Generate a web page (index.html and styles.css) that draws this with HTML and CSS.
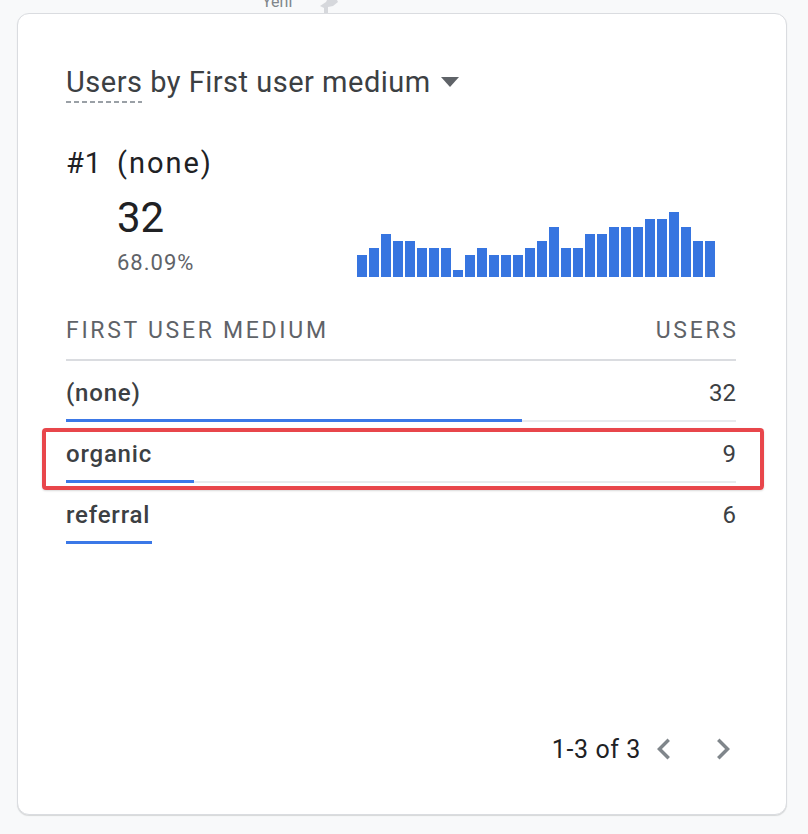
FILE: index.html
```html
<!DOCTYPE html>
<html>
<head>
<meta charset="utf-8">
<link rel="stylesheet" href="styles.css">
</head>
<body>
<div class="topstrip">
  <span class="yeni">Yeni</span>
  <svg class="pin" width="26" height="14" viewBox="0 0 26 14"><path d="M6 6 L12 2 L14 -2 L22 -2 L24 2 L19 6 L14 7 L14 14 L10 14 L10 8 Z" fill="#d6d8dc"/></svg>
</div>
<div class="card">
  <div class="title-row">
    <span class="title"><span class="dashed">Users</span> by First user medium</span>
    <svg class="caret" width="18" height="10" viewBox="0 0 18 10"><path d="M0 0 L18 0 L9 10 Z" fill="#5f6368"/></svg>
  </div>
  <div class="rank"><span class="rank-no">#1</span><span class="rank-name">(none)</span></div>
  <div class="metric-row">
    <div class="metric">
      <div class="big">32</div>
      <div class="pct">68.09%</div>
    </div>
    <div class="spark">
      <div class="bar" style="height:22px"></div>
      <div class="bar" style="height:29px"></div>
      <div class="bar" style="height:43px"></div>
      <div class="bar" style="height:36px"></div>
      <div class="bar" style="height:36px"></div>
      <div class="bar" style="height:29px"></div>
      <div class="bar" style="height:29px"></div>
      <div class="bar" style="height:29px"></div>
      <div class="bar" style="height:7px"></div>
      <div class="bar" style="height:22px"></div>
      <div class="bar" style="height:29px"></div>
      <div class="bar" style="height:22px"></div>
      <div class="bar" style="height:22px"></div>
      <div class="bar" style="height:22px"></div>
      <div class="bar" style="height:29px"></div>
      <div class="bar" style="height:36px"></div>
      <div class="bar" style="height:50px"></div>
      <div class="bar" style="height:29px"></div>
      <div class="bar" style="height:29px"></div>
      <div class="bar" style="height:43px"></div>
      <div class="bar" style="height:43px"></div>
      <div class="bar" style="height:50px"></div>
      <div class="bar" style="height:50px"></div>
      <div class="bar" style="height:50px"></div>
      <div class="bar" style="height:58px"></div>
      <div class="bar" style="height:58px"></div>
      <div class="bar" style="height:65px"></div>
      <div class="bar" style="height:50px"></div>
      <div class="bar" style="height:36px"></div>
      <div class="bar" style="height:36px"></div>
    </div>
  </div>
  <div class="table">
    <div class="thead"><span>FIRST USER MEDIUM</span><span class="th-right">USERS</span></div>
    <div class="row">
      <div class="cells"><span class="label">(none)</span><span class="num">32</span></div>
      <div class="track"><div class="fill" style="width:68.09%"></div></div>
    </div>
    <div class="row highlighted">
      <div class="cells"><span class="label">organic</span><span class="num">9</span></div>
      <div class="track"><div class="fill" style="width:19.15%"></div></div>
    </div>
    <div class="row last">
      <div class="cells"><span class="label">referral</span><span class="num">6</span></div>
      <div class="track"><div class="fill" style="width:12.77%"></div></div>
    </div>
  </div>
  <div class="pager">
    <span class="range">1-3 of 3</span>
    <svg class="chev" width="42" height="42" viewBox="0 0 24 24"><path d="M15.41 7.41 14 6l-6 6 6 6 1.41-1.41L10.83 12z" fill="#80868b"/></svg>
    <svg class="chev" width="42" height="42" viewBox="0 0 24 24"><path d="M8.59 16.59 10 18l6-6-6-6-1.41 1.41L13.17 12z" fill="#80868b"/></svg>
  </div>
</div>
</body>
</html>
```

FILE: styles.css
```css
html, body {
  margin: 0;
  padding: 0;
}
body {
  background: #f8f9fa;
  font-family: Roboto, "Liberation Sans", Arial, sans-serif;
  width: 808px;
  height: 834px;
  overflow: hidden;
}
.topstrip {
  height: 13px;
  overflow: hidden;
  display: flex;
  align-items: flex-end;
  padding-left: 262px;
}
.yeni {
  font-size: 16px;
  line-height: 16px;
  color: #80868b;
  margin-bottom: 3px;
}
.pin {
  margin-left: 22px;
  margin-bottom: -1px;
}
.card {
  margin-left: 17px;
  width: 770px;
  height: 802px;
  box-sizing: border-box;
  background: #fff;
  border: 1px solid #dadce0;
  border-radius: 12px;
  box-shadow: 0 1px 1px rgba(60, 64, 67, 0.18);
  padding: 52px 50px 44px 48px;
  display: flex;
  flex-direction: column;
}
.title-row {
  display: flex;
  align-items: flex-start;
}
.title {
  display: inline-block;
  font-size: 29px;
  line-height: 32px;
  color: #3c4043;
  padding-bottom: 5px;
  letter-spacing: 0.5px;
}
.dashed {
  display: inline-block;
  padding-bottom: 5px;
  margin-bottom: -5px;
  background-image: repeating-linear-gradient(to right, #9aa0a6 0 5px, transparent 5px 8px);
  background-size: 100% 2px;
  background-repeat: no-repeat;
  background-position: left bottom;
}
.caret {
  margin-left: 10px;
  margin-top: 11px;
}
.rank {
  margin-top: 45px;
  font-size: 29px;
  line-height: 30px;
  color: #202124;
  display: flex;
}
.rank-no {
  width: 51px;
  letter-spacing: 1px;
}
.rank-name {
  letter-spacing: 2px;
}
.metric-row {
  display: flex;
  align-items: flex-end;
  padding-left: 51px;
}
.metric {
  display: flex;
  flex-direction: column;
}
.big {
  margin-top: 16px;
  font-size: 42px;
  line-height: 48px;
  color: #202124;
}
.pct {
  margin-top: 8px;
  font-size: 22px;
  line-height: 26px;
  letter-spacing: 1px;
  color: #5f6368;
}
.spark {
  margin-left: auto;
  margin-right: 21px;
  display: flex;
  align-items: flex-end;
  gap: 2px;
  margin-bottom: -1px;
}
.bar {
  width: 10px;
  background: #3775e0;
}
.table {
  margin-top: 43px;
}
.thead {
  display: flex;
  justify-content: space-between;
  font-size: 23px;
  line-height: 24px;
  letter-spacing: 2.7px;
  color: #5f6368;
  padding-bottom: 16px;
  border-bottom: 2px solid #dadce0;
}
.th-right {
  margin-right: -2.7px;
}
.row {
  position: relative;
  padding-top: 18px;
}
.cells {
  display: flex;
  justify-content: space-between;
  font-size: 24px;
  line-height: 28px;
  color: #3c4043;
}
.label {
  font-weight: 500;
  letter-spacing: 0.8px;
}
.track {
  margin-top: 12px;
  height: 3px;
  background: linear-gradient(to bottom, transparent 1px, #e8eaed 1px);
}
.row.last .track {
  background: none;
}
.fill {
  height: 3px;
  background: #3b78e7;
}
.highlighted::after {
  content: "";
  position: absolute;
  left: -24px;
  right: -28px;
  top: 6px;
  bottom: -7px;
  border: 4px solid #e8464b;
  border-radius: 4px;
  box-shadow: 0 1px 2px rgba(0, 0, 0, 0.15);
}
.pager {
  margin-top: auto;
  display: flex;
  justify-content: flex-end;
  align-items: center;
  margin-right: -8px;
}
.range {
  font-size: 25px;
  letter-spacing: 0.6px;
  color: #202124;
  margin-right: 2px;
}
.chev + .chev {
  margin-left: 17px;
}
```
